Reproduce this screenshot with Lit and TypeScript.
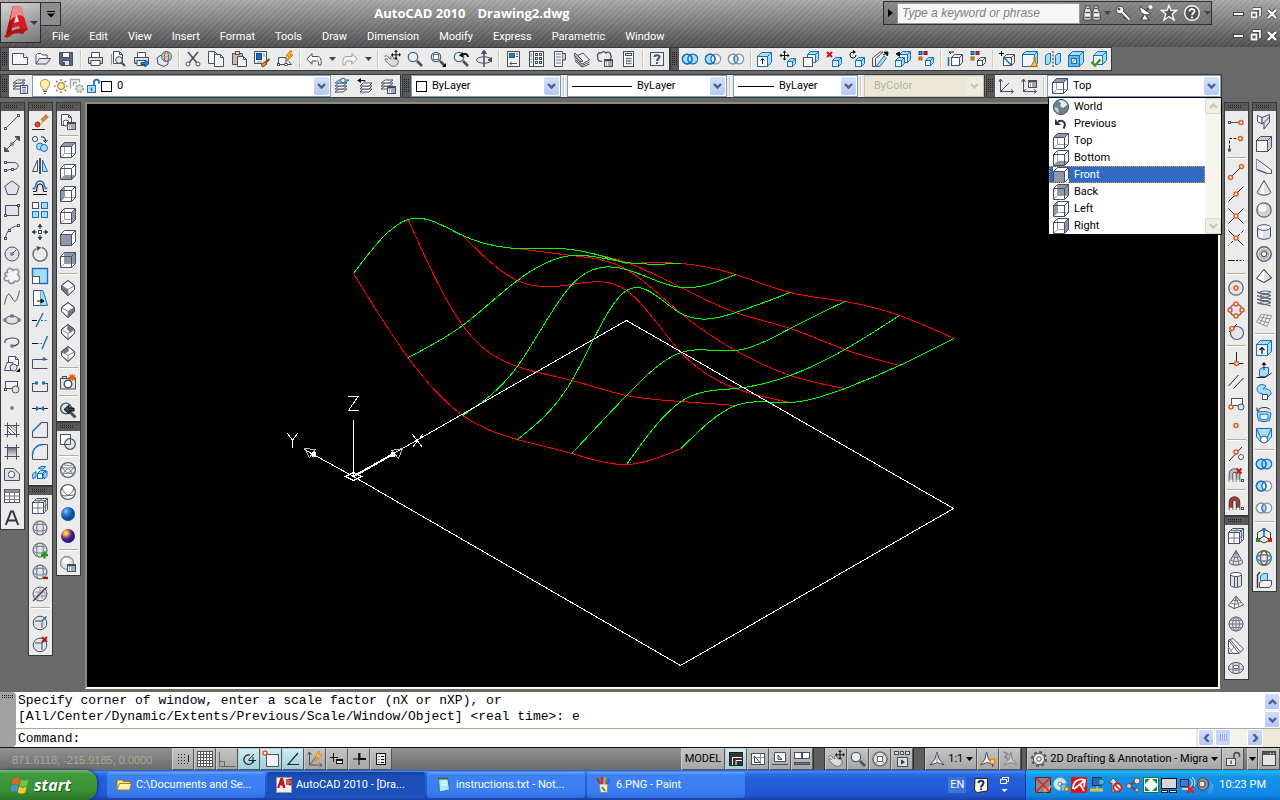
import { LitElement, html, svg, css, nothing } from "lit";
import { customElement, property, state } from "lit/decorators.js";
import { unsafeSVG } from "lit/directives/unsafe-svg.js";

/* ---------- icon drawing helpers ---------- */
const K = "#465060";
const B = "#1a70c0";
const LB = "#a5dcf6";
const O = "#e8591a";
const G = "#8d949e";
const LG = "#dfe2e8";

const p = (d: string, s = K, f = "none", w = 1) => `<path d="${d}" stroke="${s}" fill="${f}" stroke-width="${w}"/>`;
const c = (x: number, y: number, r: number, s = K, f = "none", w = 1) =>
  `<circle cx="${x}" cy="${y}" r="${r}" stroke="${s}" fill="${f}" stroke-width="${w}"/>`;
const r = (x: number, y: number, w: number, h: number, s = K, f = "none") =>
  `<rect x="${x}" y="${y}" width="${w}" height="${h}" stroke="${s}" fill="${f}"/>`;
const e = (x: number, y: number, a: number, b: number, s = K, f = "none", w = 1) =>
  `<ellipse cx="${x}" cy="${y}" rx="${a}" ry="${b}" stroke="${s}" fill="${f}" stroke-width="${w}"/>`;
const dashed = (shape: string, pattern: string) => shape.replace("/>", ` stroke-dasharray="${pattern}"/>`);
const node = (x: number, y: number) => r(x - 1, y - 1, 2, 2, K, "#fff");
const snap = (x: number, y: number) => c(x, y, 2, O, "#fff", 1.5);
const solid = (x: number, y: number, s: number, d: number, st = B, f = LB, front = "#e8f6fd") =>
  p(`M${x} ${y + d}L${x + d} ${y}H${x + d + s}V${y + s}L${x + s} ${y + s + d}H${x}Z`, st, f) +
  r(x, y + d, s, s, st, front) + p(`M${x + s} ${y + d}L${x + s + d} ${y}`, st);

const FACES: Record<string, string> = {
  top: "M.5 4.5L4.5 .5H15.5L11.5 4.5Z",
  bottom: "M.5 15.5L4.5 11.5H15.5L11.5 15.5Z",
  left: "M.5 4.5L4.5 .5V11.5L.5 15.5Z",
  right: "M11.5 4.5L15.5 .5V11.5L11.5 15.5Z",
  front: "M.5 4.5H11.5V15.5H.5Z",
  back: "M4.5 .5H15.5V11.5H4.5Z",
};
const viewCube = (face: string) =>
  p("M.5 4.5L4.5 .5H15.5V11.5L11.5 15.5H.5Z", "none", "#fff") +
  (face === "front" ? "" : p("M4.5 .5V11.5H15.5M4.5 11.5L.5 15.5", "#9aa0aa")) +
  p(FACES[face], "none", "#8f98a6") +
  p("M.5 4.5L4.5 .5H15.5V11.5L11.5 15.5H.5ZM.5 4.5H11.5V15.5M11.5 4.5L15.5 .5");
const isoCube = (face: string) =>
  p("M8 .5L14.5 5.5V9.5L8 15.5L1.5 9.5V5.5Z", K, "#fff") + p(face, "none", "#6f7886") +
  p("M1.5 5.5L8 9.5L14.5 5.5M8 9.5V15.5", "#7c8592") + p("M8 .5L14.5 5.5V9.5L8 15.5L1.5 9.5V5.5Z");
const lens = (x = 6, y = 6) => p(`M${x + 4} ${y + 4}L${x + 9} ${y + 9}`, K, "none", 2.6) + c(x, y, 4.7, "#59636f", "#dff0f1", 1.3);
const globeLines = c(8, 8, 7, K, LG) + e(8, 8, 3.5, 7) + p("M1 8H15M2.2 4.5H13.8M2.2 11.5H13.8");
const rings = (a: string, b: string, mid: string, sa = B, sb = B) =>
  c(5.2, 8, 4.9, sa, a, 1.2) + c(10.8, 8, 4.9, sb, b, 1.2) + p("M8 4A4.9 4.9 0 0 1 8 12A4.9 4.9 0 0 1 8 4Z", B, mid, 1.2) +
  c(5.2, 8, 4.9, sa, "none", 1.2);
const pixels = r(1, .5, 3, 3, "#16509a", "#3f8fe0") + r(6, .5, 3, 3, "#7c1414", "#c03030") + r(1, 6, 3, 3, "#a05a00", "#f08a20");
const redX = (x: number, y: number) => p(`M${x} ${y}l5 5m0-5l-5 5`, "#c81414", "none", 2);
const cross4 = (x: number, y: number) =>
  p(`M${x - 4} ${y}H${x + 4}M${x} ${y - 4}V${y + 4}`, "#111") +
  p(`M${x} ${y - 5}l2 2h-4zM${x} ${y + 5}l2-2h-4zM${x - 5} ${y}l2-2v4zM${x + 5} ${y}l-2-2v4z`, "none", "#111");
const page = (x: number, y: number, w: number, h: number) =>
  p(`M${x} ${y}H${x + w - 3}L${x + w} ${y + 3}V${y + h}H${x}Z`, K, "#f8f9fa") + p(`M${x + w - 3} ${y}V${y + 3}H${x + w}`);
const printer = p("M4.5 6V1.5H12.5V6", K, "#fff") + p("M1.5 6.5H15.5V12.5H1.5Z", K, "#b9bec6") + p("M4 9.5H13V14.5H4Z", K, "#fff") + p("M2 8H15", "#fff");
const layers = (y = 0, col = K) => [8, 5, 2].map((k) => p(`M1 ${y + k + 3}L5 ${y + k}H13L9 ${y + k + 3}Z`, col, "#fff")).join("");
const smallPanel = r(7.5, 8.5, 8, 7, K, "#fff") + p("M8 9.5H15", "#3b4a60", "none", 2) + p("M9 12h1M11 12h4M9 14h1M11 14h4", K);
const hand = p("M1 6C1 4 3 4 4 6L7 8C6 4 8 4 9 6L10 8C13 7 15 9 14 12C13 16 8 16 6 14C4 12 1 10 1 8C2 7 3 8 4 9", "#6a6f78", "#d9dcdf");
const magnet = (a: string, tip: string) =>
  p("M3 14V6A3.5 3.5 0 0 1 10 6V14", "#333", "none", 4.5) + p("M3 13.5V6A3.5 3.5 0 0 1 10 6V13.5", a, "none", 3) +
  p("M1.5 13H4.5M8.5 13H11.5", tip, "none", 2.4) + r(13.5, 11.5, 2, 2, K, "#fff");
const hatch = p("M3.5 .5V15.5M12.5 .5V15.5M.5 3.5H15.5M.5 12.5H15.5");

const ICONS: Record<string, string> = {
  new: p("M.5 2.5H11.5L15.5 6.5V13.5H.5Z", K, "#f4f5f8") + p("M11.5 2.5V6.5H15.5", K, "#fff"),
  open: p("M1 13V4L2.5 2.5H6L7.5 4H12V7", K, "#fff") + p("M1 13L4.5 7.5H15.5L11.5 13Z", K, LG),
  save: p("M1.5 1.5H14.5V14.5H3L1.5 13Z", K, "#5d6a7d") + r(4.5, 1.5, 7, 5, K, "#f5f6f8") + r(4.5, 9.5, 7, 5, K, "#dfe2e6") + p("M6 11V14", K, "none", 2),
  print: printer,
  preview: page(3.5, .5, 9, 12) + p("M1.5 13.5V3", G) + c(9, 9, 3.3, K, "#e2ecee") + p("M11.5 11.5L15 15", K, "none", 2.2),
  publish: printer + p("M8 11.5H12V9L16 12.5L12 16V13.5H8Z", "#0c4c90", "#2d86dc"),
  web: p("M1 7L5 4L12 6V13L8 15.5L2 13Z", K, "#e5e7ec") + c(10.5, 5.5, 5, "#2072b8", "#9bdcf4") + e(10.5, 5.5, 2.2, 5, "#d83030") + p("M5.5 5.5H15.5M7 2.5H14", "#e0a020"),
  cut: p("M3 1L12 12M13 1L4 12", K, "none", 1.6) + c(3, 13, 2, K, "#fff") + c(13, 13, 2, K, "#fff"),
  copyclip: page(.5, .5, 9, 12) + page(6.5, 3.5, 9, 12),
  paste: p("M1.5 2.5H11.5V13.5H1.5Z", K, "#cdb9a4") + r(4.5, .5, 4, 3, K, "#ddd") + page(6.5, 5.5, 9, 10),
  match: p("M.5 .5H12.5V12.5H.5Z", K, "#eef0f3") + r(2.5, 2.5, 5, 6, "#0d4c94", "#1b6cc0") + p("M9 3H11M9 5H11M3 11H8", G) + p("M15.5 8L11 12", "#7a4a20", "none", 2) + p("M11 10.5L13 13L9 16L7 14Z", "#8a4a10", "#d8893a"),
  block: p("M1.5 6.5H9V13.5H1.5ZM9 13.5H14.5L11.5 10", K, "#f5f5f5") + node(1.5, 13.5) + node(9, 13.5) + p("M13 0L9 5H12L10 10L16 4H13L15 0Z", "#e07b00", "#ffb52c"),
  undo: p("M.8 8L6 2.5V5.5H11C15 5.5 15.5 9 15 14H12.5C13 10.5 12 10 10 10H6V13.3Z", K, "#fff"),
  redo: p("M15.2 8L10 2.5V5.5H5C1 5.5 .5 9 1 14H3.5C3 10.5 4 10 6 10H10V13.3Z", "#9ca1a8", "#f4f4f4"),
  pan: hand + cross4(12, 3.8),
  zoom: lens(),
  zoomwin: lens() + r(3.5, 3.5, 5, 5, "#69737e", "#f4fbfb") + p("M16 12V16H12Z", "none", "#000"),
  zoomprev: lens() + p("M15 6C15 3 12 2 9 3.5", "#000", "none", 1.8) + p("M6 4.5L10 1V6.5Z", "none", "#000"),
  orbit: e(8, 9, 7.5, 3.2) + p("M8 0V16", K, "none", 1.6) + p("M8 -1L10.5 2.5H5.5ZM12 9L15.5 6.5V11Z", K, K),
  props: r(2.5, .5, 12, 15, K, "#f7f8fa") + r(4.5, 2.5, 5, 4, "#245c94", "#3878b8") + p("M11 3H13M11 5.5H13M5 12.5H12M7 10.5L5 12.5L7 14.5", K),
  center: r(1.5, .5, 14, 15, K, "#f7f8fa") + p("M5.5 .5V15.5M2.5 3H4M2.5 5H4M2.5 8H4M2.5 11H4") + [2, 6, 10].map((y) => r(7.5, y + .5, 2, 2) + r(11.5, y + .5, 2, 2)).join(""),
  palettes: p("M3.5 .5H11.5V15.5H3.5Z", K, "#f5f6f8") + p("M11.5 2.5H14.5V9H11.5", K, "#ccc") + p("M5 3H10M5 6H10M5 9H10M5 12H10", "#98a0ac", "none", 1.6),
  sheet: p("M.5 6L9 2L15.5 9L8 13ZM.5 8L8 14.5L15.5 11M1 10L8 16L15.5 13", K, "#f5f5f5") + p("M1 2L9 10L6 11L0 4Z", K, "#b8bdc5"),
  markup: p("M1 6.5C-.5 4 1.5 1 4 2C6 0 8 .5 9 2C12 0 14 2 13.5 4C15 6 14 7 13 7.5M1 6.5C0 9 2 11 5 10", K, "none", 1.3) + smallPanel,
  calc: r(3.5, .5, 10, 15, K, "#fbfbfb") + r(5.5, 2.5, 6, 2, K, "#fff") + dashed(p("M6 7.5H11.5M6 10H11.5M6 12.5H11.5", K, "none", 1.6), "1.6 .6"),
  help: r(1.5, 1.5, 13, 13, K, "#eceff2") + p("M5.5 6C5.5 3.5 10.5 3.5 10.5 6C10.5 8 8 7.5 8 10", K, "none", 2) + p("M8 11.2V13", K, "none", 2),

  union: rings(LB, LB, LB), subtract: rings(LB, "#f4f4f4", "#fff", B, G), intersect: rings("#f4f4f4", "#f4f4f4", LB, G, G),
  extrude: solid(.5, 1.5, 10, 4, B, LB, "#fff") + p("M5.5 13V8M3.5 9.5L5.5 7.5L7.5 9.5", "#111"),
  movefaces: cross4(4.5, 4.5) + solid(7.5, 7.5, 5, 3),
  offsetfaces: solid(4.5, .5, 8, 3, B, LB, "#fff") + r(.5, 6.5, 9, 9, K, "#fff"),
  delfaces: redX(1, 1) + solid(6.5, 6.5, 6, 3),
  rotfaces: dashed(c(4, 4, 3, "#111"), "14 5") + p("M4 -1L7 1L4 3Z", "none", "#111") + solid(6.5, 6.5, 6, 3),
  taper: p("M.5 15.5V7L8 1H11L3.5 7.5V15.5Z", K, "#f0f0f0") + p("M4 15.5L12 5L14 7.5L8 15.5Z", B, LB) + p("M15.5 1.5L11 4M16 1L12 1L15.5 5Z", "#111", "#111"),
  copyfaces: solid(4.5, .5, 8, 3) + solid(.5, 6.5, 6, 3) + p("M4.5 1L1 3L4.5 5Z", "#111", "#111"),
  colorfaces: pixels + solid(7.5, 6.5, 5, 3),
  copyedges: solid(4.5, 3.5, 8, 3, K, "#eee", "#fff") + p("M1.5 6V15", B, "none", 1.6) + p("M7 1H2L4 3", "#111"),
  coloredges: pixels + solid(7.5, 6.5, 5, 3, K, "#eee", "#fff"),
  imprint: solid(4.5, 3.5, 8, 3, K, "#eee", "#fff") + p("M4.5 6L12 14", B, "none", 1.6) + p("M0 2.5H5M2.5 0V5", "#111"),
  clean: solid(.5, .5, 12, 3, B, LB, "#f4f4f4") + p("M12 6V10L9 15.5H15.5L13 10V6Z", "#a86500", "#ffc64a"),
  separate: p("M.5 4.5L3.5 2.5H5.5V11L3.5 13.5H.5Z", B, LB) + p("M10.5 4.5L13 2.5H15.5V11L13 13.5H10.5Z", B, LB) + dashed(p("M8 0V16", "#222"), "2 1.5"),
  shell: solid(.5, .5, 11, 4, B, LB, "#67b9ea") + r(3.5, 7.5, 5, 5, B, "#fff") + p("M3.5 12L8.5 7", B),
  check: solid(2.5, .5, 9, 4, B, LB, "#f0f6fa") + p("M.5 11L4 14.5L9.5 8.5", "#3c9a10", "none", 2.4),

  layermgr: layers() + r(8.5, 7.5, 7, 8, K, "#fff") + p("M10 9.5H14", B, "none", 1.6) + p("M10 12h4M10 14h4", "#666"),
  layercur: layers(3, K) + p("M1 5L5 2H15L11 5Z", B, LB) + c(9, 2.5, 2.3, K, "#eee"),
  layerprev: [8, 5, 2].map((k) => p(`M3 ${k + 6}L6 ${k + 3}H15L12 ${k + 6}Z`, K, "#fff")).join("") + p("M3 2.5H8V4", "#111") + p("M0 2.5L4 0V5Z", "none", "#111"),
  layerstate: layers() + smallPanel,
  bulb: p("M6 10.5C1.500 7 3 1.500 8 1.500S14.500 7 10 10.5V12H6Z", "#aa8a3c", "#ffeea0") + p("M6 13.5H10M7 15.5H9", K),
  sun: c(8, 8, 3.4, "#aa8a3c", "#ffeea0", 1.2) + p("M8 1V3M8 13V15M1 8H3M13 8H15M3 3L4.4 4.4M11.6 11.6L13 13M13 3L11.6 4.4M3 13L4.4 11.6", "#68625a", "none", 1.2),
  freeze: p("M1.5 10.5V1.5H10.5V4.5M4.5 8V4.5H8", "#a4a4a4", "none", 1.4) + dashed(c(10.5, 10.5, 3.5, "#a4a4a4", "#ddd", 2), "2 1"),
  unlock: p("M9 7V4C9 .8 14 .8 14 4V5.5", B, "none", 1.8) + r(2.5, 7.5, 8, 7, B, "#b4e0f6") + p("M6.5 9.5V13", B, "none", 1.4),
  padlock: p("M9 7V4C9 .8 14.5 .8 14.5 4V6", K, "none", 1.6) + r(1.5, 7.5, 9, 7, K, "#e6e6e6") + p("M6 9.5V13", K, "none", 1.4),
  ucs: p("M2.5 2V13.5H15M2.5 13.5L11 5M.5 4L2.5 1L4.5 4M13 11.5L15.5 13.5L13 15.5"),
  ucsnamed: p("M2.5 2V13.5H15M.5 4L2.5 1L4.5 4M13 11.5L15.5 13.5L13 15.5M2.5 13.5L5 11") + r(7.5, 2.5, 8, 7, K, "#fff") + p("M8 3.5H15", K, "none", 2) + p("M9 6h1M11 6h4M9 8h1M11 8h4"),

  line: p("M1.5 14.5L14.5 1.5") + node(1.5, 14.5) + node(14.5, 1.5),
  xline: p("M2 14L14 2") + p("M.5 15.5V11L5 15.5ZM15.5 .5V5L11 .5Z", K, K) + node(8, 8),
  pline: p("M1.5 4.5H10C15.5 4.5 15.5 11.5 10 11.5H7M1.5 12.5C4 12.5 4 11.5 7 11.5") + node(1.5, 4.5) + node(1.5, 12.5) + node(8.5, 11.5),
  polygon: p("M8 .8L15.3 6.3L12.5 14.5H3.5L.7 6.3Z", K, LG),
  rect: r(1.5, 3.5, 13, 10, K, LG) + node(1.5, 13.5) + node(14.5, 3.5),
  arc: p("M1.5 14.5C2 8 6 3 14.5 1.5") + node(1.5, 14.5) + node(5.5, 6.5) + node(14.5, 1.5),
  circle: c(8, 8, 7, K, LG) + p("M8 8L12 4") + node(8, 8),
  cloud: p("M4 5C1 1 7 -1.500 9 2.500C13 -.500 17 3 13.500 6.500C17.500 9 15 15 11 13C9 16.500 4.500 16 4.500 12.500C0 14 -1.500 9.500 2.500 8C-.500 6.500 1 3.500 4 5Z", G, "#f4f4f6", 1.6),
  spline: p("M.5 14.5C3 2 5 2 8 8S13 12 15.5 .5"),
  ellipse: e(8, 8, 7, 4, K, LG) + node(8, 4) + node(1, 8) + node(15, 8),
  ellarc: p("M1 9C0 5 5 4 9 4C15 4 16 8 14 10C12 12 10 12 8 12", K, "none", 1.2) + node(8, 12),
  insert: page(4.5, .5, 10, 9) + p("M.5 14.5L3 6.5H9V14.5Z", K, "#eee") + c(9.5, 11.5, 3.5, K, LG) + p("M16 12V16H12Z", "none", "#000"),
  makeblock: r(1.5, 3.5, 12, 7, K, "#f2f2f4") + c(11.5, 11.5, 3.5, K, LG) + node(1.5, 11.5),
  point: r(7, 7, 2, 2, K, "#fff"),
  hatch: r(3.5, 3.5, 9, 9, "none", "#fff") + p("M4 9L8 13M4 5L12 13M6 4L13 10M9 4L13 7", "#59636f") + hatch,
  gradient: `<defs><linearGradient id="gg" x2="0" y2="1"><stop offset="0" stop-color="#68707c"/><stop offset="1" stop-color="#e8eaee"/></linearGradient></defs>` + r(3.5, 3.5, 9, 9, "none", "url(#gg)") + hatch,
  region: p("M.5 2.5H10L15.5 8V14.5H.5Z", K, LG) + c(7.5, 8.5, 3.2, K, "#fff"),
  table: r(.5, 1.5, 15, 13, K, "#fff") + p("M1 3H15", G, "none", 2.6) + p("M.5 4.5H15.5M.5 8H15.500M.5 11.5H15.5M5.5 4V14.5M10.5 4V14.5", "#707986"),
  mtext: p("M1.8 15L7 1.5H9L14.2 15M3.5 10.5H12.5", "#2f3742", "none", 2),

  erase: p("M15.5 1.5L8 8.5", "#c08a3c", "none", 4) + p("M9.5 6.5L6 9.5", "#f2e3c0", "none", 4) + c(5.5, 10.5, 2.5, "#8a2f10", "#d84a20") + p("M0 15.5H13", "#222"),
  copy: c(3, 3, 2.6, K, "#f4f4f6") + c(8, 10.5, 3.5, B, LB) + c(12, 12, 3.5, B, LB) + p("M9 1C12 .5 13.5 2 13.5 5M11.5 4L13.5 6.5L15.5 4", "#111"),
  mirror: p("M5.5 2V13.5H.5Z", K, "#f4f4f6") + p("M10.5 2V13.5H15.5Z", B, LB) + p("M8 0V16", "#111", "none", 1.4),
  offset: p("M1 14.5H15M1 11.5H4C6 11.5 3 4 8 4S10 11.5 12 11.5H15", "#111", "none", 1.2) + p("M.5 8.5H2.5C4 7 3 1 8 1S12 7 13.5 8.5H15.5", B, "none", 1.4),
  array: r(.5, .5, 6, 6, K, "#fff") + r(9.5, .5, 6, 6, B, LB) + r(.5, 9.5, 6, 6, B, LB) + r(9.5, 9.5, 6, 6, B, LB),
  move: p("M8 0V5M8 11V16M0 8H5M11 8H16", "#2c3440", "none", 1.2) + p("M8 0L10.5 3H5.5ZM8 16L10.5 13H5.5ZM0 8L3 5.5V10.5ZM16 8L13 5.5V10.5Z", "none", "#2c3440") + r(6.5, 6.5, 3, 3),
  rotate: p("M4 2.5A7 7 0 1 0 10 1.5", "#6a717b", "none", 1.5) + p("M4.5 0L9.5 1.5L5 5Z", "none", "#4a525e"),
  scale: p("M.5 8.5V.5H15.5V15.5H7.5", B, LB, 1.4) + r(.5, 8.5, 7, 7, K, "#fff"),
  stretch: p("M8 .5H11L15.5 15.5H8Z", B, LB) + p("M8 .5H1.5V15.5H8", K, "#fff") + p("M5 11H11M9 9L12 11L9 13Z", "#111", "#111"),
  trim: p("M0 8.5H5", "#111") + p("M4 15L11 1", B, "none", 1.4) + dashed(p("M9 8.5H16", B), "2 1.5"),
  extend: p("M0 9.5H5", "#111") + dashed(p("M5 9.5H10", B), "2 1.5") + p("M10 15L15.5 2", B, "none", 1.4),
  breakpt: p("M15.5 12.5H.5V3.5H15.5") + r(11, 2, 2, 2, B, B),
  break: p("M.5 5V13.5H15.5V5M.5 5.5H3M13 5.5H15.5") + r(3.5, 4, 2, 2, B, B) + r(10.5, 4, 2, 2, B, B),
  join: p("M0 8.5H16", "#222") + p("M4.5 6.5L7 8.5L4.5 10.5ZM11.5 6.5L9 8.5L11.5 10.5Z", B, B),
  chamfer: p("M.5 9V15.5H15.5V.5H9") + p("M.5 9.5L9.5 .5", B, "none", 1.4),
  fillet: p("M.5 11V15.5H15.5V.5H11") + p("M.5 11C.5 5 5 .5 11 .5", B, "none", 1.4),
  explode: solid(5.5, 4.5, 5, 3) + p("M.5 8L4 5.5V11L1 13ZM11.5 8L15 5V10.5L12 13ZM6 2.5L9 .5H14L11 3Z", B, LB),

  meshbox: p("M.5 4.5L4.5 .5H15.5V11.5L11.5 15.5H.5Z", K, LG) + r(.5, 4.5, 11, 11, K, "#fff") + p("M6 4.5V15.5M.5 10H11.5M2.5 2.5H13.5V13.5M6 4.5L10 .5M11.5 10L15.5 6", "#707986") + p("M11.5 4.5L15.5 .5"),
  smooth: c(8, 8, 7, K, LG) + p("M2.500 5C5 4 11 4 13.500 5M1.500 9.500C5 11.500 11 11.500 14.500 9.500M5.500 1.500C4.500 5 4.500 11 5.500 14.500M10.500 1.500C11.500 5 11.500 11 10.500 14.500", "#707986"),
  dash: c(8, 8, 7, K, "#f0f1f4") + p("M3 6H13V12M8 1V8M2 10H15M6 6V14M10 3V13", "#8b929c") + p("M1 15L15 1", "#444", "none", 1.3),
  crease: c(8, 9, 6.8, K, LG) + p("M3 7H10V14M10 7L14 3", K) + p("M14.5 2.5L10 7", B, "none", 1.6),

  namedviews: page(1.5, .5, 10, 11) + c(6, 9, 3, K, "#fff") + smallPanel,
  camera: r(.5, 4.5, 15, 10.5, K, LG) + c(8, 10, 3.8, K, "#fff", 1.4) + r(2.5, 2.5, 4, 2, K, "#ccc") + p("M9.5 1L15 6M15 1L9.5 6M12.2 0V7M8.7 3.5H15.7", "#ee5b10", "none", 1.4),
  back: c(6, 6.5, 5.4, K, "#d8e9ea", 1.4) + p("M10 10L15.5 15.5", K, "none", 3) + p("M4 7.5L9 3V6H14V9H9V12Z", "#111", "#3d4651"),
  wire2d: r(.5, .5, 10, 10, K, "#fff") + c(10, 10, 5.3, K, "#e4e6ea", 1.2) + p("M4.5 10.5H10.5V4.5", K),
  wire3d: c(8, 8, 7.4, "#5a636e", "#f1f2f4", 1.3) + p("M2 4C5 12 11 13 15 10M14 4C11 12 5 13 1 10M3 2.5C8 4 12 4 13 2.5M3 13C6 5 12 4 15 7M13 14C11 6 5 4 1 7", "#7a828c"),
  hidden3d: c(8, 8, 7.4, "#5a636e", "#fff", 1.3) + p("M2 4C5 12 11 13 15 10M14 4C11 12 7 13 1 11", "#5a636e"),
  realistic: `<defs><radialGradient id="rb" cx=".35" cy=".3"><stop offset="0" stop-color="#8cc4f4"/><stop offset=".5" stop-color="#2a7ed0"/><stop offset="1" stop-color="#0e4f96"/></radialGradient></defs><circle cx="8" cy="8" r="7" fill="url(#rb)" stroke="none"/>`,
  conceptual: `<defs><radialGradient id="rc" cx=".35" cy=".3"><stop offset="0" stop-color="#fff0a0"/><stop offset=".35" stop-color="#f4a428"/><stop offset=".7" stop-color="#69389a"/><stop offset="1" stop-color="#2a1c80"/></radialGradient></defs><circle cx="8" cy="8" r="7" fill="url(#rc)" stroke="none"/>`,
  vsmanage: c(7, 7, 6.5, G, LG, 1.3) + c(6, 5, 3, "none", "#fff") + smallPanel,

  track: p("M2 8.5H11") + node(1.5, 8.5) + snap(13, 8.5),
  from: dashed(p("M1.5 12V2.5H11", "#222"), "3 1.5") + node(1.5, 14) + snap(12.5, 2.5),
  endpoint: p("M2.5 13.5L13.5 2.5", "#222") + snap(2.5, 13.5) + snap(13.5, 2.5),
  midpoint: p("M.5 15.5L15.5 .5", "#222") + snap(8, 8),
  inters: p("M.5 .5L15.5 15.5M15.5 .5L.5 15.5", "#222") + snap(8, 8),
  appint: p("M.5 .5L15.5 15.5", "#222") + dashed(p("M15.5 .5L.5 15.5", "#222"), "3 2") + snap(8, 8),
  extension: p("M0 8.5H7", "#222") + dashed(p("M8 8.5H16", "#222"), "2 1.5"),
  censnap: c(8, 8, 7.2, "#59636f", "#e4e6ea", 1.2) + snap(8, 8),
  quadrant: c(8, 8, 6, "#59636f", "#e4e6ea", 1.2) + snap(8, 2) + snap(8, 14) + snap(2, 8) + snap(14, 8),
  tangent: c(9, 9, 6.5, "#59636f", "#e4e6ea", 1.2) + p("M1 8L9 0", "#222") + snap(4, 4.5),
  perp: p("M8.5 0V10M1 11.5H15.5", "#222") + snap(8.5, 11.5),
  parallel: p("M.5 12L10.5 1M5.5 14.5L15.5 4", "#222"),
  inssnap: r(3.5, 2.5, 11, 7, K, "#fff") + c(13, 11, 3, K, LG) + snap(3, 11),
  nodesnap: snap(8, 7.5),
  nearest: p("M1 15L14 1", "#222") + snap(8, 6) + c(13, 11, 2.5, K, "#fff"),
  nosnap: magnet("#b9bcc0", "#f4f4f4") + redX(8.5, .5),
  osnap: magnet("#a83a3a", "#f4f4f4"),

  mcone: p("M8 .5L15 12.5C12 16 4 16 1 12.5Z", K, LG) + p("M8 .5L5 14.5M8 .5L11 14.5M4.5 6.5C7 8 9 8 11.5 6.5M2.5 10C6 12 10 12 13.5 10", "#707986"),
  mcyl: p("M2.5 2.5V13.5C5 16 11 16 13.5 13.5V2.5", K, LG) + e(8, 2.5, 5.5, 2, K, "#fff") + p("M6.5 5V15M9.5 5V15"),
  mpyr: p("M8 2L15.5 11L6 14.5L.5 11.5Z", K, "#fff") + p("M8 2L6 14.5M5 6L7.5 7L11 6M3 9L7 10.5L13 8.5M8 2L11 12.5", "#707986"),
  msphere: c(8, 8, 7, K, LG) + e(8, 8, 3.5, 7, "#707986") + p("M8 1V15M1 8H15M2.2 4.5H13.8M2.2 11.5H13.8", "#707986"),
  mwedge: p("M.5 2L5 .5L15.5 11L11 15.5H.5Z", K, "#fff") + p("M.5 2L11 15.5M.5 2V15.5", K) + p("M.5 15.5L6 9M5 15.5L.5 9", G) + p("M2 1.5L12.5 14"),
  mtorus: e(8, 8, 7.5, 5.5, K, LG) + e(8, 7, 3, 1.8, K, "#fff") + p("M.5 8C3 11 13 11 15.5 8M5 3.5V13M11 3.5V13", "#707986"),

  polysolid: p("M1.5 1.5L6 3.5V10L1.5 7.5Z", K, "#fff") + p("M6 3.5L13.5 .5V8L8 15V8.5L6 10Z", K, LG) + p("M8 8.5L13.5 3"),
  box: solid(.5, .5, 11, 4, K, "#c8ccd3", "#f4f5f7"),
  wedge: p("M.5 1V11L11.5 15.5H15.5V12Z", K, "#fff") + p("M.5 1V11L11 13Z", "none", LG) + p("M.5 11.500L11 15.500"),
  cone: p("M8 .5L15 12.5C12 16 4 16 1 12.5Z", K, LG) + p("M7.5 2L4 13L8 14Z", "none", "#fff"),
  sphere: c(8, 8, 7.2, "#59636f", "#c9d4dd", 1.2) + c(6.5, 6, 4, "none", "#f3f8fb"),
  cylinder: p("M1.5 3.5V13C4 16 12 16 14.5 13V3.5", K, LG) + p("M4 5V14H7V5Z", "none", "#fff") + e(8, 3.5, 6.5, 2.8, K, "#fff"),
  torus: c(8, 8, 7.2, "#59636f", "#dfe2e8", 1.4) + c(8, 8, 4.8, "#9aa0aa") + c(8, 8, 2.8, "#59636f", "#fff", 1.4),
  pyramid: p("M8 1.5L15.5 10L8 14.5L.5 10.5Z", K, LG) + p("M8 1.5V14.5L.5 10.5Z", "none", "#fff") + p("M8 1.5L15.5 10L8 14.5L.5 10.5Z"),
  helix: [2, 5.5, 9, 12.5].map((y) => p(`M1 ${y}C4 ${y + 2.5} 12 ${y + 2.5} 15 ${y}M15 ${y}C12 ${y - 1.6} 6 ${y - 1} 4 ${y}M1 ${y}L15 ${y + 3.5}`, "#59636f")).join(""),
  planar: p("M5 2.5L15.5 3.5L11 14.5L.5 10Z", G, "#f3f3f5") + p("M8.5 2.8L3.8 11.5M12 3L7.5 13M3.5 5L14.5 7M2 7.5L13 11", G),
  presspull: solid(.5, .5, 11, 4) + p("M6 14V8M3.5 10L6 7.5L8.5 10", "#111", "none", 1.2),
  extr: p("M3.5 7.5L7 5.5H12.5V12L9.5 14.5H3.5Z", B, LB) + p("M.5 15.5H9L15.5 11M8 8V1", "#222") + p("M8 0L10.5 3H5.5Z", "none", "#111"),
  sweep: p("M1 5C1 1 6 -1 10 2L7 5C10 4 16 6 15 10L11 14C10 9 1 11 1 5Z", B, LB) + r(6.5, 10.5, 5, 5, K, "#fff"),
  revolve: p("M1 7C5 5 11 5 15 7L13.5 14.5C10 16 6 16 2.5 14.5Z", B, LB) + p("M4 8.5C7 8 10 8 12 8.5V13C9 14 7 14 4 13Z", B, "#dff2fc") + p("M1 5C4 .5 12 .5 14.5 4M1 1.5V5H4", "#333"),
  loft: p("M.5 .5H15.5V9L11 14H5L.5 9Z", B, LB) + p("M.5 .5L5 10M15.5 .5L11 10", B) + c(8, 11.5, 3.5, K, "#fff"),
  rotate3d: p("M8 1L14.5 4.5V11.5L8 15L1.5 11.5V4.5Z", "#333") + p("M8 8V2", B, "none", 1.6) + p("M8 8L2 12M8 8L14 12", "#333") + r(7, .5, 2, 2, B, B) + r(.5, 10.5, 3, 3, "#1a8a2a", "#1a8a2a") + r(12.5, 10.5, 3, 3, "#c02020", "#c02020"),
  orbit3d: c(8, 8, 7.3, "#2e9a3c", "none", 1.4) + e(8, 8, 3.5, 7.3, "#d23030", "none", 1.4) + e(8, 8, 7.3, 3.2, "#3c86d8", "none", 1.4),
  align3d: p("M1.5 16V3L4 0", "#333", "none", 1.4) + p("M4.5 4L7 1.5H11.5V8.5H4.5Z", B, LB) + p("M3.5 11L6 8.5H15.5V13L13.5 15.5H3.5Z", K, "#f2f2f4"),

  snapgrid: dashed(p("M3 3.5H11M3 6.5H11M3 9.5H11M3 12.5H14", "#222"), "1 2") + p("M13.5 4V11", "#222"),
  grid: r(.5, .5, 15, 15, K, "#fff") + p("M3.5 0V16M6.5 0V16M9.5 0V16M12.5 0V16M0 3.5H16M0 6.5H16M0 9.5H16M0 12.5H16", "#555"),
  ortho: p("M.5 1V15.5H16M.5 10.5H5.5V15.5", "#666"),
  polar: p("M12.5 9A4.8 4.8 0 1 1 9 4", "#222", "none", 1.2) + p("M7.5 9L13 3M7.5 9.5H15M12 6V12", "#222"),
  osn: r(3.5, 3.5, 12, 12, "#555", "#f3f3f5") + snap(2, 2),
  otrack: p("M13 2L3 13.5H14", "#222", "none", 1.2),
  ducs: p("M2.5 2V14H14M2.5 14L9 6M.5 4L2.5 1L4.5 4M12.5 12L15 14L12.5 16", "#555") + p("M12 0L8 6H11L8 11L15 4H12Z", "#e08a10", "#ffc548"),
  dyn: p("M1 6.5H9M4.5 2V11M7 8.500H14", "#111") + r(7.5, 9.5, 6, 3, "#111", "#eee"),
  lwt: p("M2 8H8M8 2V14", "#111", "none", 1.2) + p("M8 8H15M8.500 2V8", "#111", "none", 2),
  qp: r(3.5, 2.5, 9, 11, "#111", "#eee") + p("M5.5 5.5h1M8 5.5h3M5.5 8.500h1M8 8.500h3M5.5 11.5h1M8 11.5h3", "#111"),
  modelsp: r(1.5, 1.5, 13, 13, "#222", "#333") + p("M4.500 14V6.5H14M8 14V9.5H14", "#fff"),
  qv1: r(1.5, 2.5, 13, 11, K, "#fff") + p("M10.500 3V13M3 6.500H14", G) + p("M4.500 5V11.500H10Z", K, LG),
  qv2: p("M2.5 1.5H13.5V10.5H2.5Z", K, "#fff") + p("M0 13.5H16") + p("M6 4V8.500H10Z", K, "#ccc"),
  qv3: r(.5, 1.5, 7, 6, K, "#fff") + r(8.5, 1.5, 7, 6, K, "#fff") + r(.5, 11.5, 15, 2, K, "#777"),
  wheel: c(8, 8, 7, "#6c7178", "#e2e2e2", 1.6) + r(5.5, 5.5, 5, 5, "#666", "#fff") + p("M3 3L6 6M13 3L10 6M3 13L6 10M13 13L10 10", "#777"),
  motion: r(.5, .5, 4, 3, K, "#ddd") + r(6.5, .5, 3, 3, K, "#ddd") + r(11.5, .5, 4, 3, K, "#ddd") + r(3.5, 6.5, 10, 9, K, "#ddd") + p("M7 8.5L11 11L7 13.5Z", "none", "#333"),
  anno: p("M8 1L10 8L15 14L8.500 11.5L1 14L6 8Z", K, "#f5f5f5") + p("M8 2V11", G),
  annovis: p("M6.5 1L8.5 8L13.5 14L7 11.5L.8 14L5 8Z", K, "#f5f5f5") + c(12.5, 10.5, 2.6, "#e07810", "#ffd37a", 1.2) + p("M12.5 13V16"),
  annoauto: p("M9 1L10 8L15 14L9 11.5L2 14L7 8Z", "#878787", "#ccc") + p("M2 1L6 3L3 6L7 9", "#878787", "none", 1.5),
  gear: `<circle cx="8" cy="8" r="7" stroke="#555" stroke-width="2" stroke-dasharray="3 2.5"/>` + c(8, 8, 5.6, "#555", "#e8e8e8") + c(8, 8, 2.2, "#555", "#fff"),
  clean2: r(1.5, .5, 13, 14, "#444", "#e4e4e4") + p("M2 2.5H14", "#555", "none", 3) + p("M9 2.5h1M12 2.5h1", "#fff"),

  bino: p("M2 1H6V4L7 6V15H0V8ZM10 1H14V4L16 8V15H9V6L10 4Z", "#444", "#f2f2f2") + p("M2.5 3.5H5.5M1.500 7.5H6M10.5 3.5H13.500M10 7.500H14.500M7 7.500H9M1 12.500H6M10 12.500H15", "#555", "none", 1.4),
  key: c(5, 5, 4, "#444", "#f5f5f5") + p("M7 7L14.5 14.5M11 11L9.5 13.5", "#444", "none", 4) + p("M6 6L14.5 14.5", "#f5f5f5", "none", 2.2) + c(4, 4, 1, "#444", "#444"),
  dish: p("M2 1.500C1 9 7 11 13 9Z", "#444", "#fff") + p("M7.500 6L12 2M6 10L3 15H11L8 11", "#444", "#fff", 1.2) + c(12.5, 2, 1.5, "#fff", "#fff"),
  star: p("M8 .5L10 5.5H15.5L11.2 9L13 15L8 11.5L3 15L4.8 9L.5 5.5H6Z", "#f8f8f8", "#555", 1.4),
  qmark: c(8, 8, 7.3, "#f8f8f8", "#555", 1.4) + p("M5.5 6.5C5.5 3 10.5 3.5 10.5 6.2C10.5 8 8 8 8 10.2M8 11.5V13.2", "#fff", "none", 1.8),
  min: r(3.5, 6.5, 10, 3, "#444", "#f4f4f4"),
  max: p("M6 3H13V10", "#444", "none", 3.4) + p("M6 3H13V10", "#f4f4f4", "none", 1.8) + r(3.5, 5.5, 7, 7, "#444") + p("M4.500 6.500H9.500V11.500H4.500Z", "#f4f4f4", "#666", 1.8),
  close: p("M4 4L12 12M12 4L4 12", "#444", "none", 4) + p("M4 4L12 12M12 4L4 12", "#fff", "none", 2.4),

  world: c(8, 8, 7.6, K, "#6e828e") + p("M5 2C9 0 14 3 14 6L10 9L7 7L8 4Z", "none", "#e6eef0") + p("M1.5 8L5 9L6 14C3 13 1.5 11 1.5 8Z", "none", "#c4d0d4"),
  prev: p("M5 5.500C10 3.500 14 7 10.5 12.500", "#2c3440", "none", 2) + p("M2 3V9H8Z", "none", "#2c3440"),

  folder: p("M1 3H6L7.5 4.5H14V13H1Z", "#a07c18", "#ffe48a") + p("M1 13L3.5 6.5H15.5L13.5 13Z", "#a07c18", "#fff2b4"),
  acad: r(.5, .5, 15, 15, "#999", "#f0f0f0") + p("M1 11L4.5 1H7L9.5 11H7L6.3 8.5H4L3.3 11Z", "none", "#c41218") + p("M11 2V8M13 2.5H15V7.5H13Z", "#a01014", "none", 1.3),
  notepad: p("M2.5 1.5H12L13.5 13L3.5 15Z", "#2878a8", "#a8e8f8") + p("M2 1.5H12", "#555", "none", 2) + p("M5 5H11M5 8H11", "#fff"),
  paint: p("M3 7H12L11 15.5H4.5Z", "#888", "#f4ecd8") + p("M4 7L1 1M6 7V0", "#c03020", "none", 2) + p("M8 7L9 0", "#e8a010", "none", 2) + p("M10.5 7L14 2", "#3068c0", "none", 2) + p("M6 10L9 14", "#30a040", "none", 2),
  langhelp: p("M2 1.5H14.5V14L4 15.5L1.5 13Z", "#222", "#fffbe0") + p("M5.5 6C5.5 3 10.5 3 10.5 6C10.5 8 8 8 8 10.5M8 11.5V13", "#1a2a80", "none", 2),
  restore: r(6.5, .5, 6, 4, "#fff") + r(4.5, 2.5, 6, 4, "#fff", "#2b63dc") + p("M5.500 12H11.500L8.500 15Z", "none", "#fff"),
  t1: r(.5, .5, 15, 15, "#333", "#888") + p("M9 12H15M9 15L16 9", "#e8a060", "none", 2) + p("M0 0L16 16M16 0L0 16", "#f01818", "none", 1.6),
  t2: c(7, 7, 6.5, "#7aa", "#cfe9e4") + c(7, 7, 2, "#688", "#fff") + r(8, 7, 5, 7, "#357ab8", "#7cc0f0") + c(13.5, 12, 2, "#a70", "#fc3"),
  t3: r(0, 0, 16, 16, "none", "#e01018") + p("M2 12C2 4 8 1 14 3L13 10M3 12L13 4M9 7L13 14", "#fff", "none", 1.8),
  t4: r(3.5, .5, 9, 8, "#234", "#2a62c8") + p("M1 13H14", "#e4c040", "none", 3) + c(12.5, 5, 3, "#176", "#4cb0e0") + p("M8 9V13", "#ccc"),
  t5: p("M6 1L11 6H8V15H5V6H2Z", "#555", "#ddd") + c(10.5, 10.5, 4, "#d02020", "#fff", 1.8) + p("M8 8L13 13", "#d02020", "none", 1.6),
  t6: p("M4 9L11 4M4 9L12 13", "#555", "none", 2.2) + c(4, 9, 2.5, "#555", "#ccd") + c(12, 4, 3, "#555", "#dde") + c(12, 13, 2, "#555", "#cc8"),
  t7: r(.5, .5, 15, 15, "#18783c", "#fff") + p("M2 2H7L2 7ZM14 2V7L9 2ZM2 14V9L7 14ZM14 14H9L14 9Z", "none", "#109038"),
  t8: r(.5, 1.5, 15, 10, "#111", "#d8d8d8") + r(.5, 13.5, 6, 2, "#222", "#eee") + r(8.5, 13.5, 7, 2, "#222", "#eee"),
  t9: r(1.5, 2.5, 8, 7, "#234", "#4878c8") + p("M11 2C14 4 14 8 11 10M13 0C17 4 17 8 13 12", "#eee") + p("M3 12H9", "#ccc", "none", 2) + p("M8 9L15 16M15 9L8 16", "#e02020", "none", 2.2),
  t10: e(6, 7, 5.5, 6.5, "#444", "#8a8a96") + c(5, 7, 3, "#555", "#ddd") + p("M13 5C15 8 14 12 11 14M15.5 7C16.5 11 14 15 12 16", "#5ab0ff"),
};
for (const f of Object.keys(FACES)) ICONS["v_" + f] = viewCube(f);
ICONS.iso_sw = isoCube("M1.5 5.5L8 9.5V15.5L1.5 9.5Z");
ICONS.iso_se = isoCube("M14.5 5.5L8 9.5V15.5L14.5 9.5Z");
ICONS.iso_ne = isoCube("M8 .5L14.5 5.5L10 8.5L7 5Z");
ICONS.iso_nw = isoCube("M8 .5L1.5 5.5L5 8L9 5Z");
ICONS.more = ICONS.smooth + p("M9 13H16M12.5 9.5V16.5", "#18a018", "none", 2.4);
ICONS.less = ICONS.smooth + p("M11 14H16", "#b01818", "none", 2.4);
ICONS.uncrease = ICONS.crease + redX(10, 1);

const icon = (name: string) => svg`<svg class="ico" viewBox="0 0 16 16" width="16" height="16" fill="none" aria-hidden="true">${unsafeSVG(ICONS[name] ?? "")}</svg>`;
const tri = () => svg`<svg class="tri" viewBox="0 0 7 4" width="7" height="4" aria-hidden="true"><path d="M0 0H7L3.5 4Z" fill="currentColor"/></svg>`;
const chevron = (d = "M1 2L4.5 5.5L8 2") => svg`<svg class="chev" viewBox="0 0 9 8" width="9" height="8" aria-hidden="true"><path d=${d} fill="none" stroke="currentColor" stroke-width="2.4"/></svg>`;

const buttons = (names: string) => names.split(" ").filter(Boolean).map((n) =>
  n === "|" ? html`<span class="sep"></span>`
  : n === "v" ? html`<button class="drop" aria-label="More">${tri()}</button>`
  : html`<button class="tool" aria-label=${n}>${icon(n)}</button>`);

const shared = css`
  * { box-sizing: border-box; }
  button { border: 0; padding: 0; margin: 0; background: none; font: inherit; color: inherit; display: flex; align-items: center; justify-content: center; }
  .ico { display: block; flex: none; overflow: visible; }
  .tri, .chev { display: block; flex: none; }
`;

/* ---------- toolbar, horizontal or vertical ---------- */
@customElement("tool-bar")
class ToolBar extends LitElement {
  @property() items = "";
  @property({ type: Boolean, reflect: true }) vertical = false;
  static styles = [shared, css`
    :host { display: flex; flex: none; background: #ebebeb; border: 1px solid #39393b; height: 24px; align-items: stretch; }
    :host([vertical]) { flex-direction: column; height: auto; width: 25px; }
    .grip { width: 8px; flex: none; background: #58585a; padding: 4px 2px 4px 1px; }
    .grip::before { content: ""; display: block; height: 100%; background: repeating-linear-gradient(90deg, #1c1c1c 0 1px, transparent 1px 2px); -webkit-mask: repeating-linear-gradient(#000 0 1px, transparent 1px 2px); mask: repeating-linear-gradient(#000 0 1px, transparent 1px 2px); }
    :host([vertical]) .grip { width: auto; height: 8px; padding: 2px 6px 2px 3px; }
    .tool { width: 23px; flex: none; padding-right: 1px; }
    :host([vertical]) .tool { height: 22px; }
    .drop { width: 13px; flex: none; color: #444; }
    .sep { width: 2px; margin: 2px 2px; background: #cfc9b0; border-right: 1px solid #f8f8f4; flex: none; }
    :host([vertical]) .sep { width: auto; height: 2px; background: #b4b09c; border: 0; border-bottom: 1px solid #fff; }
  `];
  render() {
    return html`<span class="grip"></span>${buttons(this.items)}<slot></slot>`;
  }
}

/* ---------- combo box ---------- */
@customElement("combo-box")
class ComboBox extends LitElement {
  @property() value = "";
  @property() label = "";
  @property({ attribute: false }) lead: unknown = nothing;
  @property({ type: Boolean, reflect: true }) disabled = false;
  static styles = [shared, css`
    :host { display: flex; align-items: center; background: #fff; border: 1px solid #7f9db9; height: 22px; flex: none; gap: 5px; padding: 0 1px 0 4px; }
    select { flex: 1; min-width: 0; appearance: none; border: 0; outline: 0; padding: 0; background: transparent; color: #000; opacity: 1; font: 11px/16px Roboto, "Liberation Sans", sans-serif; }
    .lead { display: flex; align-items: center; }
    .arrow { width: 15px; height: 18px; border-radius: 2px; background: linear-gradient(#d5e1fd, #b4c8f6); display: flex; align-items: center; justify-content: center; color: #4d6185; flex: none; pointer-events: none; }
    :host([disabled]) { background: #ebe8d8; border-color: #c9c7ba; }
    :host([disabled]) select { color: #b5b2a2; }
    :host([disabled]) .arrow { background: #efece0; color: #c9c7ba; }
  `];
  render() {
    return html`<span class="lead">${this.lead}</span><select aria-label=${this.label} ?disabled=${this.disabled}><option>${this.value}</option></select><span class="arrow">${chevron()}</span>`;
  }
}

/* ---------- model space with wire surface ---------- */
const HEIGHTS = [
  [273, 357, 415, 439, 453, 464, 448],
  [219, 325, 366, 380, 395, 401, 405],
  [235, 280, 284, 290, 352, 388, 402],
  [248, 255, 269, 313, 350, 375, 388],
  [249, 262, 287, 312, 328, 349, 365],
  [263, 263, 274, 292, 301, 315, 338],
];
const STEP = 54.6;

/* natural cubic spline through evenly spaced heights, as Bézier segments */
const spline = (x0: number, ys: number[]) => {
  const n = ys.length - 1;
  const m = ys.map(() => 0);
  for (let k = 0; k < 60; k++)
    for (let i = 1; i < n; i++) m[i] = (6 * (ys[i + 1] - 2 * ys[i] + ys[i - 1]) - m[i - 1] - m[i + 1]) / 4;
  let d = `M${x0} ${ys[0]}`;
  for (let i = 0; i < n; i++) {
    const rise = ys[i + 1] - ys[i];
    const s0 = rise - (2 * m[i] + m[i + 1]) / 6;
    const s1 = rise + (m[i] + 2 * m[i + 1]) / 6;
    const x = x0 + STEP * i;
    d += `C${x + STEP / 3} ${ys[i] + s0 / 3} ${x + (STEP * 2) / 3} ${ys[i + 1] - s1 / 3} ${x + STEP} ${ys[i + 1]}`;
  }
  return d;
};
const redLines = HEIGHTS.map((row, u) => spline(353.5 + STEP * u, row.map((y) => y + 0.5)));
const greenLines = HEIGHTS[0].map((_, v) => spline(353.5 + STEP * v, HEIGHTS.map((row) => row[v] + 0.5)));

@customElement("model-space")
class ModelSpace extends LitElement {
  static styles = css`
    :host { display: block; background: #000; border: 2px solid; border-color: #8d8b7e #fffff0 #fffff0 #8d8b7e; min-width: 0; overflow: hidden; }
    svg { display: block; width: 100%; height: 100%; }
  `;
  render() {
    return html`<svg role="img" aria-label="Surface mesh" fill="none" shape-rendering="crispEdges">
      <g transform="translate(-87 -104)">
        ${redLines.map((d) => svg`<path d=${d} stroke="#f00"/>`)}
        ${greenLines.map((d) => svg`<path d=${d} stroke="#0f0"/>`)}
        <path d="M353.5 476.5L626.5 320.5L953.500 508.500L680.5 665.5Z" stroke="#fff"/>
        <path d="M353.5 476V420M353.5 476.5L306 450.5M345.500 476.5L353.5 472.5L361.500 476.5L353.5 480.5Z" stroke="#fff"/>
        <path d="M353.5 476.5L393 454" stroke="#fff" stroke-width="2"/>
        <path d="M304.5 448.5L315.5 449.5L309.5 457.5ZM402.5 448.5L391.5 450.5L398.5 458.5Z" stroke="#bbb"/>
        <path d="M312 452H316V457H312ZM391 452H395V457H391Z" fill="#fff"/>
        <path d="M348 396.5H358L348.5 410.5H358.5M287.5 433.5L292.5 440L297.5 433.5M292.5 440V447.5M412.5 434.5L422.5 447.5M422.5 434.5L412.5 447.5" stroke="#fff"/>
      </g></svg>`;
  }
}

/* ---------- whole window ---------- */
const MENUS = ["File", "Edit", "View", "Insert", "Format", "Tools", "Draw", "Dimension", "Modify", "Express", "Parametric", "Window"];
const VIEWS: [string, string][] = [["World", "world"], ["Previous", "prev"], ["Top", "v_top"], ["Bottom", "v_bottom"], ["Front", "v_front"], ["Back", "v_back"], ["Left", "v_left"], ["Right", "v_right"]];
const TASKS: [string, string][] = [["C:\\Documents and Se...", "folder"], ["AutoCAD 2010 - [Dra...", "acad"], ["instructions.txt - Not...", "notepad"], ["6.PNG - Paint", "paint"]];

@customElement("app-root")
class AppRoot extends LitElement {
  @state() private picked = "Front";
  @state() private task = 1;

  static styles = [shared, css`
    :host { display: flex; flex-direction: column; height: 100vh; overflow: hidden; background: #696969; font: 11px/16px Roboto, "Liberation Sans", sans-serif; color: #000; }

    header { display: flex; height: 47px; flex: none; color: #fff; background: repeating-linear-gradient(135deg, rgba(255,255,255,.05) 0 2px, rgba(0,0,0,.03) 2px 4px), linear-gradient(#a8a8a8, #4f4f4f); }
    .logo { width: 41px; height: 41px; margin-top: 2px; border: 1px solid #2c2c2c; background: linear-gradient(160deg, #d4d4d4, #777); flex: none; }
    .logo svg { display: block; }
    .mid { flex: 1; display: flex; flex-direction: column; min-width: 0; }
    .titles { height: 28px; display: flex; align-items: flex-start; justify-content: space-between; }
    .qat { width: 20px; height: 24px; margin-top: 2px; border: 1px solid #333; border-left: 0; color: #000; background: #8d8d8d; }
    h1 { margin: 0; padding-top: 5px; font: bold 13px/16px "Open Sans", sans-serif; display: flex; gap: 12px; }
    .search { display: flex; align-items: center; height: 24px; width: 329px; border: 1px solid #2e2e2e; margin-top: 1px; padding-left: 4px; background: rgba(90,90,90,.35); }
    .search input { flex: 1; min-width: 0; height: 21px; margin: 0 0 0 4px; border: 1px solid #999; background: #f6f6f6; padding: 0 4px; font: italic 12px/16px "Liberation Sans", sans-serif; }
    .search input::placeholder { color: #808080; opacity: 1; }
    .search button { width: 23px; height: 22px; }
    .search .drop { width: 8px; color: #444; }
    nav { display: flex; gap: 20px; padding: 1px 0 0 11px; }
    nav a { color: #fff; text-decoration: none; }
    .wins { display: grid; grid-template-columns: 17px 17px 17px; grid-auto-rows: 22px; padding: 3px 0 0 17px; align-items: center; flex: none; }

    .row { display: flex; flex: none; }
    .row.two { padding: 3px 0 4px; gap: 1px; position: relative; }
    .gap { width: 2px; flex: none; background: #cfc9b0; border-right: 1px solid #fff; margin: 2px; }
    .fill { flex: 1; }
    .tail { width: 23px; padding-right: 1px; }
    .views { position: relative; display: flex; }

    .list { position: absolute; top: 22px; right: -1px; width: 174px; height: 138px; z-index: 2; background: #fff; border: 1px solid #000; display: flex; }
    .list ul { list-style: none; margin: 0; padding: 0; flex: 1; }
    .list li { height: 17px; display: flex; align-items: center; gap: 5px; padding-left: 4px; line-height: 17px; }
    .list li .ico { background: #fff; }
    .list li.on { background: #316ac5; color: #fff; outline: 1px dotted #e09a38; outline-offset: -1px; }
    .vbar { width: 16px; display: flex; flex-direction: column; justify-content: space-between; background: #f6f5ef; flex: none; }
    .vbar span { height: 16px; border: 1px solid #dcd9c8; border-radius: 2px; background: #f1efe4; color: #c8c5b4; display: flex; align-items: center; justify-content: center; }

    main { flex: 1; display: flex; min-height: 0; padding: 0 3px 3px 0; }
    .col { display: flex; flex-direction: column; margin-right: 3px; flex: none; }
    .col:last-child { margin: 0; }
    model-space { flex: 1; margin: 0 4px 0 1px; }

    .cmd { display: flex; height: 56px; flex: none; background: #fff; font: 13px/16px "Liberation Mono", monospace; border-bottom: 1px solid #111; }
    .cmd .grab { width: 16px; background: #a2a2a2; flex: none; padding: 3px 2px 0; border-radius: 0 4px 4px 0; }
    .cmd .grab i { display: block; height: 3px; background: repeating-linear-gradient(#a2a2a2 0 0, transparent 0 1px, #a2a2a2 1px 2px), repeating-linear-gradient(90deg, #222 0 1px, transparent 1px 2px); }
    .cmd .text { flex: 1; display: flex; flex-direction: column; min-width: 0; }
    .hist { height: 38px; padding: 1px 0 0 2px; border-bottom: 1px solid #aca899; white-space: pre; display: flex; }
    .hist p { margin: 0; flex: 1; }
    .sb { display: flex; background: #f3f2ec; gap: 1px; flex: none; }
    .sb.v { flex-direction: column; justify-content: space-between; width: 16px; }
    .sb button, .thumb { width: 16px; height: 17px; border-radius: 2px; border: 1px solid #fff; background: linear-gradient(#cfdcfd, #b5c9f7); color: #4d6185; }
    .ask { display: flex; flex: 1; padding-left: 2px; }
    .ask label { display: flex; flex: 1; padding-top: 2px; }
    .ask input { flex: 1; height: 14px; border: 0; outline: 0; padding: 0; background: none; font: inherit; }
    .ask .sb { width: 84px; background: linear-gradient(90deg, #ece9d8 0 2px, #f3f2ec 2px 66px, #ece9d8 66px); padding-left: 2px; }
    .ask .track { width: 14px; }
    .thumb { background: repeating-linear-gradient(90deg, #8fa8dd 0 1px, #d4e0fd 1px 2px) center / 7px 7px no-repeat, #c4d4fb; }

    .status { display: flex; height: 22px; flex: none; background: linear-gradient(#929292, #6b6b6b); }
    .coords { width: 172px; padding: 4px 0 0 12px; font: 11px/16px "Liberation Sans", sans-serif; color: #aaa699; }
    .status .tool { width: 22px; border: 1px solid; border-color: #ccc #555 #555 #ccc; background: linear-gradient(#c4c4c4, #a6a6a6); flex: none; }
    .status .tool.on { background: linear-gradient(#cdeef6, #9ccfdb); }
    .status .wide { width: auto; padding: 0 3px; gap: 3px; }
    .status .dark { width: 12px; background: #5f5f5f; border: solid #333; border-width: 0 1px; flex: none; }
    .status .narrow { width: 6px; }
    .status .menu { width: 11px; margin-left: 3px; }

    footer { display: flex; height: 30px; flex: none; color: #fff; background: linear-gradient(#1941a5 0, #4a8cf2 1px, #2e6ce6 4px, #245edb 8px, #2258d5 24px, #1941a5 30px); }
    .start { width: 97px; margin-right: 10px; border-radius: 0 12px 12px 0; background: linear-gradient(#74b66c, #3f9a3c 4px, #3a9336 20px, #2b7429); justify-content: flex-start; gap: 4px; padding-left: 11px; font: italic bold 16px/20px "Open Sans", sans-serif; text-shadow: 1px 1px 1px #1c4a1c; box-shadow: 1px 0 3px #14308a; }
    .task { width: 158px; height: 26px; margin: 2px 2px 0 0; border-radius: 3px; background: linear-gradient(#6aa4fb, #3d82f4 3px, #3a7df0 20px, #2f6ae0); justify-content: flex-start; padding-left: 9px; gap: 4px; }
    .task.on { background: linear-gradient(#163f98, #1b4eb4 4px, #1d52bc); }
    .lang { display: flex; align-items: center; gap: 7px; padding-right: 13px; }
    .lang b { font-weight: 400; background: #3a74d8; padding: 0 2px; }
    .tray { display: flex; align-items: center; gap: 2px; padding: 0 14px 0 9px; border-left: 1px solid #0a3a9c; background: linear-gradient(#1c9be8, #18b5f4 2px, #1492ea 7px, #118ae8 24px, #0d6cc8); }
    .tray time { padding-left: 4px; }
  `];

  private st(name: string, on = false) {
    return html`<button class="tool ${on ? "on" : ""}" aria-label=${name}>${icon(name)}</button>`;
  }

  render() {
    const box = (t = "#fff") => svg`<svg width="11" height="11" aria-hidden="true"><rect x=".5" y=".5" width="10" height="10" fill=${t} stroke="#000"/></svg>`;
    const rule = (w: number) => svg`<svg width=${w} height="1" aria-hidden="true"><path d="M0 .5H${w}" stroke="#000"/></svg>`;
    return html`
      <header>
        <button class="logo" aria-label="Application menu">
          <svg width="39" height="39" viewBox="0 0 39 39" aria-hidden="true">
            <path d="M5 31L12 3L20 4L27 27L20 29L18 23L11 25L9 34Z" fill="#d41c22" />
            <path d="M5 31L12 3L15 4L9 34Z" fill="#a51016" /><path d="M12 3L20 4L23 14C18 10 13 13 9 18Z" fill="#f08888" />
            <path d="M13 20L15.500 11L18 18.500Z" fill="#e8d8d8" /><path d="M3 33C10 27 18 24 26 26L22 31C16 29 10 31 6 35Z" fill="#b01218" />
            <path d="M29 18H37L33 22Z" fill="#333c4c" />
          </svg>
        </button>
        <div class="mid">
          <div class="titles">
            <button class="qat" aria-label="Quick access"><svg width="8" height="7" aria-hidden="true"><path d="M0 .5H8" stroke="#000" /><path d="M0 2.5H8L4 6.5Z" /></svg></button>
            <h1><span>AutoCAD 2010</span><span>Drawing2.dwg</span></h1>
            <div class="search">
              <svg width="5" height="8" aria-hidden="true"><path d="M0 0V8L5 4Z" /></svg>
              <input aria-label="Search" placeholder="Type a keyword or phrase" />
              <button aria-label="Find">${icon("bino")}</button><button class="drop" aria-label="Options">${tri()}</button>
              <button aria-label="Subscription">${icon("key")}</button><button aria-label="Communication">${icon("dish")}</button>
              <button aria-label="Favorites">${icon("star")}</button><button aria-label="Help">${icon("qmark")}</button>
              <button class="drop" aria-label="Help options">${tri()}</button>
            </div>
          </div>
          <nav>${MENUS.map((m) => html`<a href="#${m}">${m}</a>`)}</nav>
        </div>
        <div class="wins">
          ${["min", "max", "close", "min", "max", "close"].map((n) => html`<button aria-label=${n}>${icon(n)}</button>`)}
        </div>
      </header>

      <div class="row">
        <tool-bar items="new open save | print preview publish web | cut copyclip paste match block | undo v redo v | pan zoom zoomwin zoomprev orbit | props center palettes sheet markup calc | help"></tool-bar>
        <tool-bar items="union subtract intersect | extrude movefaces offsetfaces delfaces rotfaces taper copyfaces colorfaces | copyedges coloredges | imprint clean separate shell check"></tool-bar>
      </div>

      <div class="row two">
        <tool-bar items="layermgr">
          <combo-box style="width:299px" label="Layer" value="0" .lead=${html`${["bulb", "sun", "freeze", "unlock"].map(icon)}${box()}`}></combo-box>
          ${["layercur", "layerprev", "layerstate"].map((n) => html`<button class="tail" aria-label=${n}>${icon(n)}</button>`)}
        </tool-bar>
        <tool-bar>
          <combo-box style="width:150px" label="Color" value="ByLayer" .lead=${box()}></combo-box><span class="gap"></span>
          <combo-box style="width:160px" label="Linetype" value="ByLayer" .lead=${rule(60)}></combo-box><span class="gap"></span>
          <combo-box style="width:125px" label="Lineweight" value="ByLayer" .lead=${rule(36)}></combo-box><span class="gap"></span>
          <combo-box style="width:120px" label="Plot style" value="ByColor" disabled></combo-box>
        </tool-bar>
        <tool-bar items="ucs ucsnamed |">
          <div class="views">
            <combo-box style="width:174px" label="View" value="Top" .lead=${icon("v_top")}></combo-box>
            <div class="list">
              <ul role="listbox" aria-label="Views">
                ${VIEWS.map(([n, i]) => html`<li role="option" aria-selected=${this.picked === n} class=${this.picked === n ? "on" : ""} @click=${() => (this.picked = n)}>${icon(i)}${n}</li>`)}
              </ul>
              <div class="vbar"><span>${chevron("M1 6L4.5 2.5L8 6")}</span><span>${chevron()}</span></div>
            </div>
          </div>
        </tool-bar>
      </div>

      <main>
        <div class="col">
          <tool-bar vertical items="line xline pline polygon rect arc circle cloud spline ellipse ellarc insert makeblock point hatch gradient region table mtext"></tool-bar>
        </div>
        <div class="col">
          <tool-bar vertical items="erase copy mirror offset array move rotate scale stretch trim extend breakpt break join chamfer fillet explode"></tool-bar>
          <tool-bar vertical items="meshbox smooth more less dash | crease uncrease"></tool-bar>
        </div>
        <div class="col">
          <tool-bar vertical items="namedviews | v_top v_bottom v_left v_right v_front v_back | iso_sw iso_se iso_ne iso_nw | camera | back"></tool-bar>
          <tool-bar vertical items="wire2d | wire3d hidden3d realistic conceptual | vsmanage"></tool-bar>
        </div>
        <model-space></model-space>
        <div class="col">
          <tool-bar vertical items="track from | endpoint midpoint inters appint extension | censnap quadrant tangent | perp parallel inssnap nodesnap | nearest nosnap | osnap"></tool-bar>
          <tool-bar vertical items="meshbox mcone mcyl mpyr msphere mwedge mtorus"></tool-bar>
        </div>
        <div class="col">
          <tool-bar vertical items="polysolid box wedge cone sphere cylinder torus pyramid helix planar | presspull extr sweep revolve loft | union subtract intersect | rotate3d orbit3d align3d"></tool-bar>
        </div>
      </main>

      <div class="cmd">
        <div class="grab"><i></i></div>
        <div class="text">
          <div class="hist"><p>Specify corner of window, enter a scale factor (nX or nXP), or
[All/Center/Dynamic/Extents/Previous/Scale/Window/Object] &lt;real time>: e</p>
            <div class="sb v"><button aria-label="Up">${chevron("M1 6L4.5 2.5L8 6")}</button><button aria-label="Down">${chevron()}</button></div>
          </div>
          <div class="ask">
            <label>Command:<input /></label>
            <div class="sb">
              <button aria-label="Left">${chevron("M6.5 0L3 4L6.5 8")}</button><span class="thumb"></span><span class="track"></span>
              <button aria-label="Right">${chevron("M2.5 0L6 4L2.5 8")}</button>
            </div>
          </div>
        </div>
      </div>

      <div class="status">
        <span class="coords">871.6118, -215.9185, 0.0000</span>
        ${this.st("snapgrid")}${this.st("grid")}${this.st("ortho")}${this.st("polar", true)}${this.st("osn", true)}${this.st("otrack", true)}
        ${["ducs", "dyn", "lwt", "qp"].map((n) => this.st(n))}
        <span class="fill"></span>
        <button class="tool wide">MODEL</button>
        ${this.st("modelsp", true)}${["qv1", "qv2", "qv3"].map((n) => this.st(n))}
        <span class="dark"></span>
        ${["pan", "zoom", "wheel", "motion"].map((n) => this.st(n))}
        <span class="dark"></span>
        <button class="tool wide">${icon("anno")}1:1${tri()}</button>
        ${["annovis", "annoauto"].map((n) => this.st(n))}
        <span class="dark narrow"></span>
        <button class="tool wide">${icon("gear")}2D Drafting &amp; Annotation - Migra${tri()}</button>
        ${this.st("padlock")}
        <button class="tool menu" aria-label="Status menu">${tri()}</button>
        ${this.st("clean2")}
      </div>

      <footer>
        <button class="start">
          <svg width="19" height="18" viewBox="0 0 19 18" aria-hidden="true"><path d="M2 3C4 1 7 1 9 3L7.500 9C5.500 7.500 3 7.500 .8 8.800Z" fill="#ee5a28"/><path d="M10 3.500C12 5 15 5 17.500 3.500L16 9.500C13 11 11 11 8.500 9.500Z" fill="#78c43c"/><path d="M.5 10C3 8.500 5 8.500 7.200 10L5.700 16C4 14.500 1.500 14.500 -1 16Z" fill="#4c8cf0"/><path d="M8.200 10.500C10.500 12 13 12 15.700 10.500L14.200 16.500C12 18 9 18 6.700 16.500Z" fill="#fcc828"/></svg>
          start</button>
        ${TASKS.map(([t, i], n) => html`<button class="task ${n === this.task ? "on" : ""}" @click=${() => (this.task = n)}>${icon(i)}${t}</button>`)}
        <span class="fill"></span>
        <div class="lang"><b>EN</b>${icon("langhelp")}${icon("restore")}</div>
        <div class="tray">${["t1", "t2", "t3", "t4", "t5", "t6", "t7", "t8", "t9", "t10"].map(icon)}<time>10:23 PM</time></div>
      </footer>
    `;
  }
}
